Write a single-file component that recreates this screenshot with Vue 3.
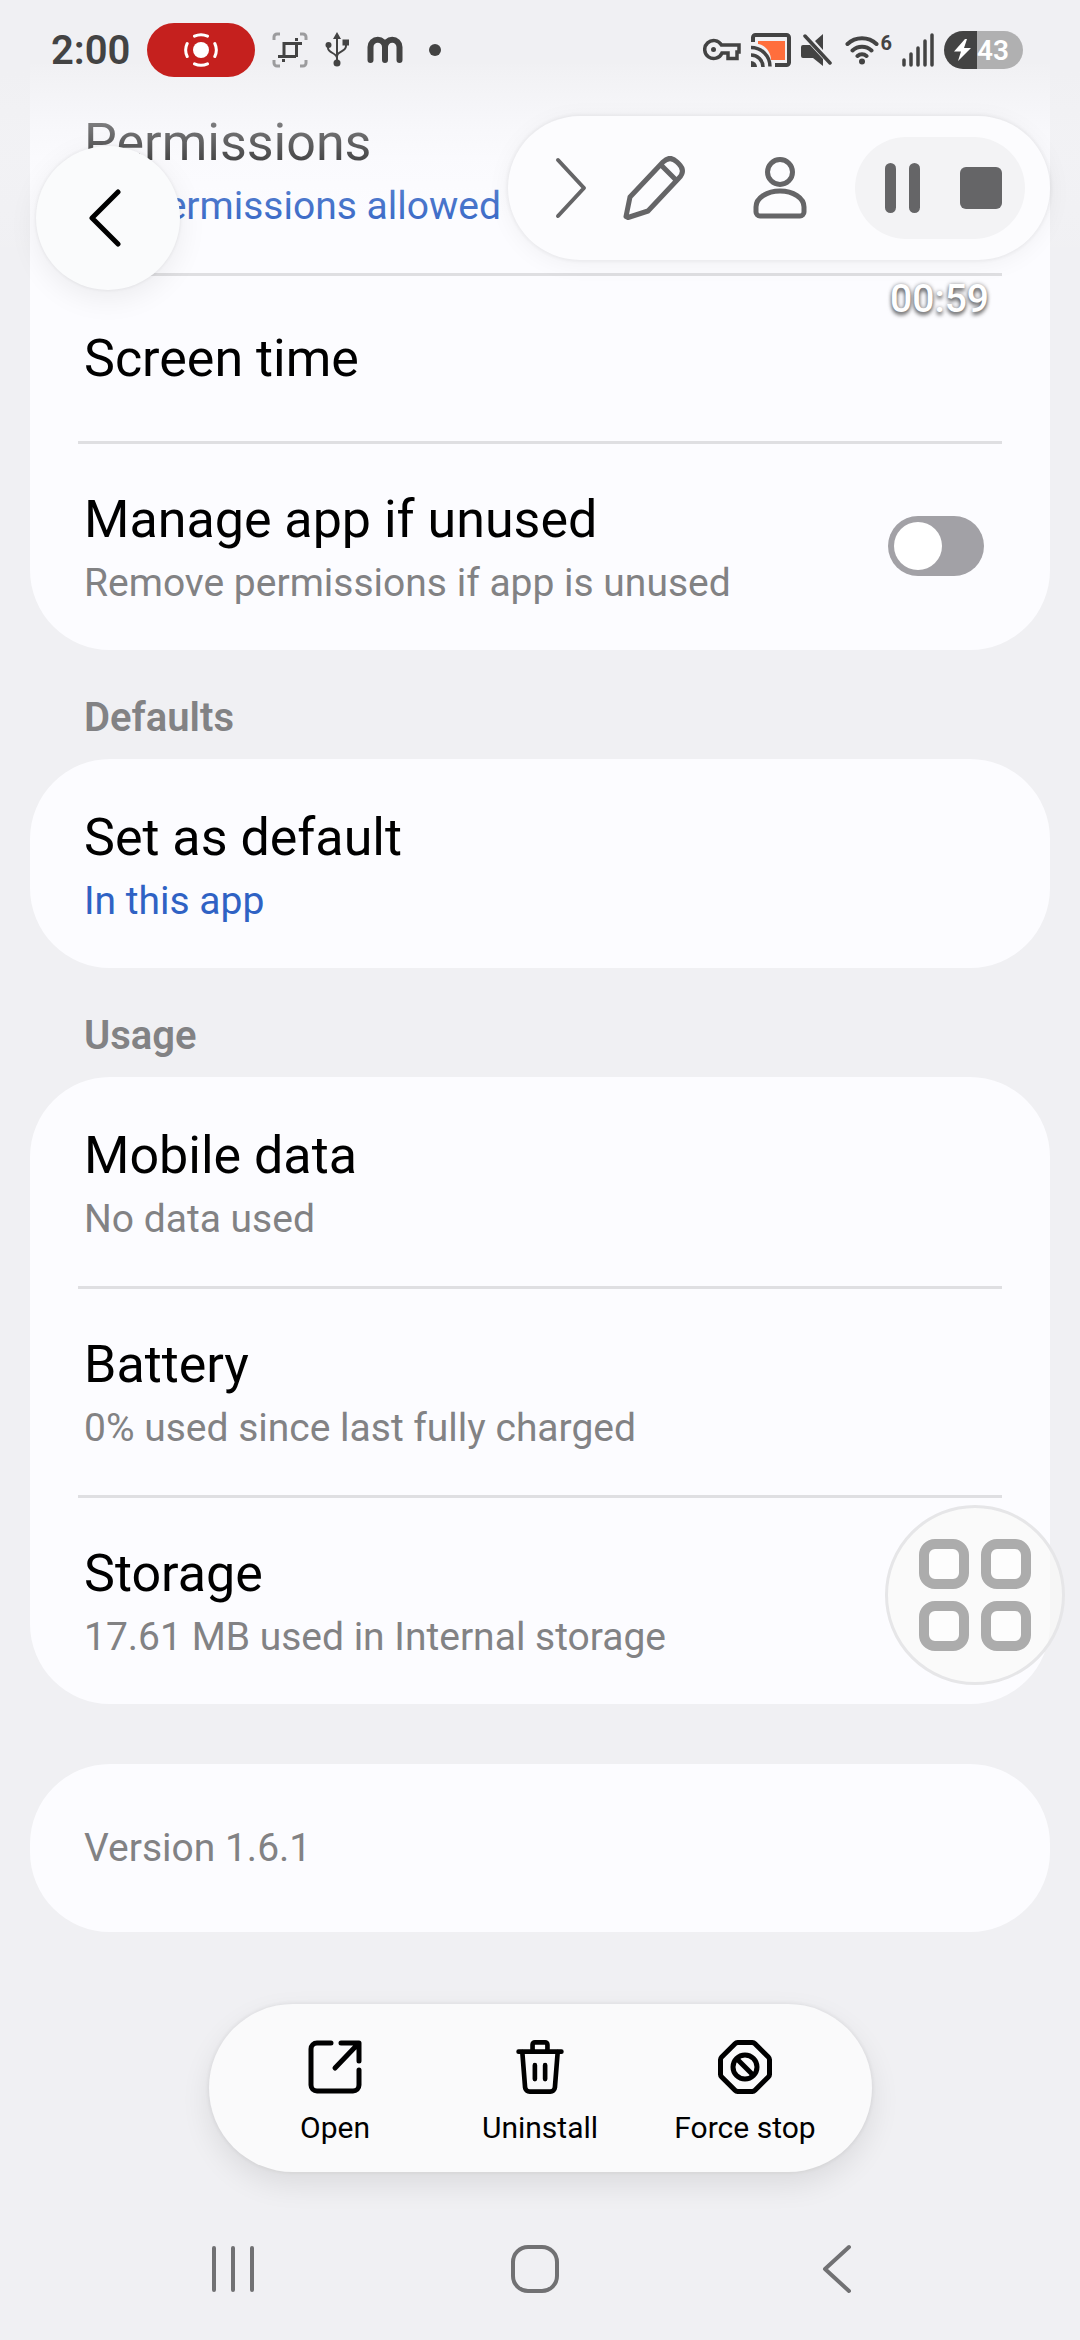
<script setup>
import { ref } from 'vue'

const manageUnused = ref(false)

const sections = [
  {
    id: 'privacy',
    rows: [
      { id: 'permissions', title: 'Permissions', detail: 'No permissions allowed', accent: true },
      { id: 'screen-time', title: 'Screen time' },
      { id: 'manage', title: 'Manage app if unused', detail: 'Remove permissions if app is unused', toggle: true }
    ]
  },
  {
    id: 'defaults',
    heading: 'Defaults',
    rows: [{ id: 'default', title: 'Set as default', detail: 'In this app', accent: true }]
  },
  {
    id: 'usage',
    heading: 'Usage',
    shortcut: true,
    rows: [
      { id: 'data', title: 'Mobile data', detail: 'No data used' },
      { id: 'battery', title: 'Battery', detail: '0% used since last fully charged' },
      { id: 'storage', title: 'Storage', detail: '17.61 MB used in Internal storage' }
    ]
  }
]
</script>

<template>
  <div class="page">
    <main class="list">
      <section v-for="section in sections" :key="section.id">
        <h2 v-if="section.heading" class="heading">{{ section.heading }}</h2>
        <div class="card" :class="{ continued: !section.heading }">
          <template v-for="row in section.rows" :key="row.id">
            <label v-if="row.toggle" class="row">
              <span class="text">
                <span class="title">{{ row.title }}</span>
                <span class="detail">{{ row.detail }}</span>
              </span>
              <input v-model="manageUnused" class="switch" type="checkbox" role="switch" />
            </label>
            <button v-else class="row" :class="{ single: !row.detail }" type="button">
              <span class="text">
                <span class="title">{{ row.title }}</span>
                <span v-if="row.detail" class="detail" :class="{ accent: row.accent }">{{ row.detail }}</span>
              </span>
            </button>
          </template>
          <button v-if="section.shortcut" class="shortcut" type="button" aria-label="Shortcuts">
            <svg width="112" height="112" viewBox="0 0 112 112" fill="#fff" fill-opacity=".6" stroke="#acacac" stroke-width="10">
              <rect x="5" y="5" width="40" height="40" rx="11" />
              <rect x="67" y="5" width="40" height="40" rx="11" />
              <rect x="5" y="67" width="40" height="40" rx="11" />
              <rect x="67" y="67" width="40" height="40" rx="11" />
            </svg>
          </button>
        </div>
      </section>
      <p class="card version">Version 1.6.1</p>
    </main>

    <nav class="actions" aria-label="App actions">
      <button type="button">
        <svg width="54" height="54" viewBox="0 0 54 54" fill="none" stroke="#000" stroke-width="5" stroke-linecap="round" stroke-linejoin="round">
          <path d="M23 3H9a6 6 0 0 0-6 6v36a6 6 0 0 0 6 6h36a6 6 0 0 0 6-6V30" />
          <path d="M33 3h18v18M50 4 27 28" />
        </svg>
        Open
      </button>
      <button type="button">
        <svg width="54" height="58" viewBox="0 0 54 58" fill="none" stroke="#000" stroke-width="5" stroke-linecap="round" stroke-linejoin="round">
          <path d="M4 12.500h46M19 12V5a2.500 2.500 0 0 1 2.500-2.500h11A2.500 2.500 0 0 1 35 5v7" />
          <path d="m8 13 3 38a5 5 0 0 0 5 4.500h22a5 5 0 0 0 5-4.500l3-38M21.500 27v15M32.500 27v15" />
        </svg>
        Uninstall
      </button>
      <button type="button">
        <svg width="54" height="54" viewBox="0 0 54 54" fill="none" stroke="#000" stroke-width="5" stroke-linejoin="round">
          <path d="M20 2.500h14a4 4 0 0 1 3 1.200L50.300 17a4 4 0 0 1 1.200 3v14a4 4 0 0 1-1.200 3L37 50.300a4 4 0 0 1-3 1.200H20a4 4 0 0 1-3-1.200L3.700 37a4 4 0 0 1-1.200-3V20a4 4 0 0 1 1.200-3L17 3.700a4 4 0 0 1 3-1.200Z" />
          <circle cx="27" cy="27" r="12" />
          <path d="m18.500 18.500 17 17" />
        </svg>
        Force stop
      </button>
    </nav>

    <nav class="system" aria-label="System navigation">
      <button type="button" aria-label="Recents">
        <svg width="44" height="50" viewBox="0 0 44 50" stroke="#717173" stroke-width="4" stroke-linecap="round"><path d="M3 4v42M22 4v42M41 4v42" /></svg>
      </button>
      <button type="button" aria-label="Home">
        <svg width="50" height="50" viewBox="0 0 50 50" fill="none" stroke="#717173" stroke-width="4"><rect x="3" y="3" width="44" height="44" rx="15" /></svg>
      </button>
      <button type="button" aria-label="Back">
        <svg width="32" height="50" viewBox="0 0 32 50" fill="none" stroke="#717173" stroke-width="4" stroke-linecap="round" stroke-linejoin="round"><path d="M28 3 4 25l24 22" /></svg>
      </button>
    </nav>

    <div class="fade"></div>

    <header class="status">
      <div class="side">
        <span class="clock">2:00</span>
        <span class="recording">
          <svg width="34" height="34" viewBox="0 0 34 34" fill="none" stroke="#fff" stroke-width="3" stroke-linecap="round">
            <circle cx="17" cy="17" r="8" fill="#fff" stroke="none" />
            <path d="M10.500 3.200a15 15 0 0 1 13 0M10.500 30.800a15 15 0 0 0 13 0M3.200 10.500a15 15 0 0 0 0 13M30.800 10.500a15 15 0 0 1 0 13" />
          </svg>
        </span>
        <svg width="36" height="36" viewBox="0 0 36 36" fill="none" stroke="#434343" stroke-width="3">
          <path stroke="#9c9c9e" d="M2 8V5a3 3 0 0 1 3-3h3M28 2h3a3 3 0 0 1 3 3v3M34 28v3a3 3 0 0 1-3 3h-3M8 34H5a3 3 0 0 1-3-3v-3" />
          <path d="M12 11.500h18M12 10v14M6 24.500h18M24.500 11v14" />
          <path d="M23 7.500h3M10 28.500h3" />
        </svg>
        <svg class="usb" width="24" height="36" viewBox="0 0 24 36" fill="none" stroke="#434343" stroke-width="2">
          <path d="M12 6v24M3 13v3c0 5 9 5 9 10M21 11v3c0 6-9 5-9 10" />
          <path fill="#434343" stroke="none" d="m12 0 4 7H8ZM17.500 7.500h6.500v6h-6.500Z" />
          <circle cx="3.500" cy="13" r="3" fill="#434343" stroke="none" />
          <circle cx="12" cy="31" r="3.500" fill="#434343" stroke="none" />
        </svg>
        <svg class="brand" width="36" height="28" viewBox="0 0 36 28" fill="none" stroke="#434343" stroke-width="6" stroke-linecap="round">
          <path d="M3.500 24V11a7.250 7.250 0 0 1 14.500 0v13M18 11a7.250 7.250 0 0 1 14.500 0v13" />
        </svg>
        <span class="dot"></span>
      </div>
      <div class="side">
        <svg class="key" width="38" height="24" viewBox="0 0 38 24" fill="none" stroke="#434343" stroke-width="3.500">
          <path d="M18.500 7H36v7h-2v6.500h-9V15h-6a9 9 0 1 1-.5-8Z" />
          <circle cx="10.500" cy="11.500" r="2.500" fill="#434343" stroke="none" />
        </svg>
        <svg class="cast" width="40" height="34" viewBox="0 0 40 34" fill="none" stroke="#434343" stroke-width="4">
          <path fill="#ff6e3c" stroke="none" d="M7 8h27v19H20C20 19 14 12 7 11Z" />
          <path d="M2 9V4.500A2.500 2.500 0 0 1 4.500 2h31A2.500 2.500 0 0 1 38 4.500v25a2.500 2.500 0 0 1-2.500 2.500H24" />
          <path stroke-width="3.500" d="M0 14.500a19 19 0 0 1 19 19M0 22a12 12 0 0 1 12 12" />
          <path fill="#434343" stroke="none" d="M0 28a6 6 0 0 1 6 6H0Z" />
        </svg>
        <svg class="mute" width="32" height="32" viewBox="0 0 32 32" fill="#434343">
          <path d="M2 11h7l13 14v7l-10-8H2a2 2 0 0 1-2-2v-9a2 2 0 0 1 2-2ZM14 7l8-7v16Z" />
          <path d="m4 2 25 27" fill="none" stroke="#434343" stroke-width="3.500" stroke-linecap="round" />
        </svg>
        <span class="wifi">
          <svg width="34" height="30" viewBox="0 0 34 30" fill="none" stroke="#434343" stroke-width="4" stroke-linecap="round">
            <path d="M2.500 9a21 21 0 0 1 29 0M7.500 15.500a14 14 0 0 1 19 0M12.500 21a7 7 0 0 1 9 0" />
            <circle cx="17" cy="26.500" r="3" fill="#434343" stroke="none" />
          </svg>
          <sup>6</sup>
        </span>
        <svg class="signal" width="32" height="34" viewBox="0 0 32 34" stroke="#434343" stroke-width="3.500" stroke-linecap="round">
          <path d="M2 27v5M9 21v11M16 15v17M23 8v24M30 2v30" />
        </svg>
        <span class="power">
          <svg width="20" height="22" viewBox="0 0 20 22" fill="#fff"><path d="M12 0 1 12.500h7L5 22l13-13h-7l3-9Z" /></svg>
          43
        </span>
      </div>
    </header>

    <button class="back" type="button" aria-label="Navigate up">
      <svg width="32" height="60" viewBox="0 0 32 60" fill="none" stroke="#000" stroke-width="5" stroke-linecap="round" stroke-linejoin="round"><path d="M29 4 3 30l26 26" /></svg>
    </button>

    <div class="recorder">
      <div class="tools">
        <button type="button" aria-label="Collapse">
          <svg width="32" height="62" viewBox="0 0 32 62" fill="none" stroke="#656567" stroke-width="4" stroke-linecap="round" stroke-linejoin="round"><path d="m3 3 26 28L3 59" /></svg>
        </button>
        <button class="draw" type="button" aria-label="Draw">
          <svg width="62" height="64" viewBox="0 0 62 64" fill="none" stroke="#656567" stroke-width="5" stroke-linejoin="round">
            <path d="M3 60.500 7 41 40 6q7-7 14 0l2 2q7 7 0 14L25 55 5 61.500ZM38 9l16 16" />
          </svg>
        </button>
        <button class="person" type="button" aria-label="Show camera">
          <svg width="54" height="64" viewBox="0 0 54 64" fill="none" stroke="#656567" stroke-width="5" stroke-linejoin="round">
            <circle cx="27" cy="16" r="12.500" />
            <path d="M3 56v-5a24 16 0 0 1 48 0v5a4 4 0 0 1-4 4H7a4 4 0 0 1-4-4Z" />
          </svg>
        </button>
        <div class="transport">
          <button type="button" aria-label="Pause">
            <svg width="36" height="50" viewBox="0 0 36 50" fill="#656567"><rect x="0" y="0" width="11" height="50" rx="5.500" /><rect x="24" y="0" width="11" height="50" rx="5.500" /></svg>
          </button>
          <button type="button" aria-label="Stop">
            <svg width="42" height="42" viewBox="0 0 42 42" fill="#656567"><rect width="42" height="42" rx="6" /></svg>
          </button>
        </div>
      </div>
      <time class="elapsed">00:59</time>
    </div>
  </div>
</template>

<style>
body {
  background: #f0f0f3;
}
</style>

<style scoped>
.page {
  position: relative;
  min-height: 100vh;
  overflow: hidden;
  box-sizing: border-box;
  background: #f0f0f3;
  color: #000;
  font-family: Roboto, "Noto Sans", sans-serif;
}

button {
  margin: 0;
  padding: 0;
  border: 0;
  background: none;
  color: inherit;
  font: inherit;
}

svg {
  display: block;
  flex: none;
}

.list {
  padding: 64px 30px 0;
}

.card {
  position: relative;
  margin: 0;
  border-radius: 80px;
  background: #fcfcff;
}

.continued {
  border-radius: 0 0 80px 80px;
}

.heading {
  box-sizing: border-box;
  margin: 0;
  padding: 41px 54px 14px;
  color: #828284;
  font-size: 40px;
  font-weight: 600;
  line-height: 54px;
}

.row {
  display: flex;
  align-items: center;
  justify-content: space-between;
  box-sizing: border-box;
  width: calc(100% - 96px);
  min-height: 209px;
  margin: 0 48px;
  padding: 0 18px 0 6px;
  text-align: left;
}

.row + .row {
  box-shadow: inset 0 3px #dfdfe2;
}

.single {
  min-height: 168px;
}

.text {
  display: flex;
  flex-direction: column;
  gap: 2px;
  padding-top: 4px;
}

.title {
  font-size: 52px;
  line-height: 68px;
}

.detail,
.version {
  color: #828284;
  font-size: 39px;
  line-height: 54px;
}

.accent {
  color: #2f62c4;
}

.version {
  margin-top: 60px;
  padding: 57px 54px;
}

.switch {
  appearance: none;
  display: flex;
  flex: none;
  box-sizing: border-box;
  width: 96px;
  height: 60px;
  margin: 0;
  padding: 6px;
  border-radius: 30px;
  background: #a2a1a6;
}

.switch::before {
  content: "";
  width: 48px;
  height: 48px;
  border-radius: 50%;
  background: #fff;
}

.switch:checked {
  justify-content: flex-end;
  background: #2f62c4;
}

.shortcut {
  position: absolute;
  right: -15px;
  bottom: 19px;
  display: flex;
  align-items: center;
  justify-content: center;
  box-sizing: border-box;
  width: 180px;
  height: 180px;
  border: 3px solid #e6e6e8;
  border-radius: 50%;
  background: rgba(249, 249, 248, 0.65);
}

.actions {
  display: grid;
  grid-template-columns: repeat(3, 205px);
  justify-content: center;
  box-sizing: border-box;
  width: fit-content;
  height: 168px;
  margin: 72px auto 0;
  padding: 0 24px;
  border-radius: 84px;
  background: #fafafb;
  box-shadow: 0 0 3px 2px rgba(0, 0, 0, 0.04), 0 12px 30px rgba(0, 0, 0, 0.09);
}

.actions button {
  display: flex;
  flex-direction: column;
  align-items: center;
  justify-content: flex-end;
  gap: 14px;
  padding-bottom: 24px;
  font-size: 30px;
  line-height: 40px;
}

.actions svg {
  height: 54px;
}

.system {
  display: grid;
  grid-template-columns: repeat(3, 1fr);
  padding: 72px 92px 46px 82px;
}

.system button {
  display: flex;
  justify-content: center;
}

.fade {
  position: absolute;
  inset: 0 0 auto;
  height: 273px;
  background: linear-gradient(#f0f0f3 60px, rgba(240, 240, 243, 0.88) 72px, rgba(243, 243, 246, 0.48) 128px, rgba(246, 246, 249, 0.29) 160px, rgba(252, 252, 255, 0.07) 218px, rgba(252, 252, 255, 0));
  pointer-events: none;
}

.status {
  position: absolute;
  inset: 0 0 auto;
  display: flex;
  align-items: center;
  justify-content: space-between;
  height: 100px;
  padding: 0 57px 0 51px;
  color: #434343;
}

.side {
  display: flex;
  align-items: center;
}

.clock {
  font-size: 40px;
  font-weight: 600;
}

.recording {
  display: flex;
  align-items: center;
  justify-content: center;
  width: 108px;
  height: 54px;
  margin: 0 17px;
  border-radius: 27px;
  background: #c5201e;
}

.usb {
  margin-left: 17px;
}

.brand {
  margin-left: 18px;
}

.dot {
  width: 12px;
  height: 12px;
  margin-left: 26px;
  border-radius: 50%;
  background: #434343;
}

.cast,
.mute,
.signal,
.power {
  margin-left: 10px;
}

.wifi {
  display: flex;
  align-items: flex-start;
  gap: 2px;
  margin-left: 12px;
}

.wifi sup {
  font-size: 20px;
  font-weight: 700;
  line-height: 16px;
  vertical-align: top;
}

.power {
  display: flex;
  align-items: center;
  gap: 4px;
  box-sizing: border-box;
  width: 79px;
  height: 38px;
  padding-left: 9px;
  border-radius: 19px;
  background: linear-gradient(90deg, #434343 42%, #b0b0b1 42%);
  color: #fff;
  font-size: 28px;
  font-weight: 600;
}

.back {
  position: absolute;
  top: 146px;
  left: 36px;
  display: flex;
  align-items: center;
  justify-content: center;
  box-sizing: border-box;
  width: 144px;
  height: 144px;
  padding-right: 6px;
  border-radius: 50%;
  background: #fafbfc;
  box-shadow: 0 0 3px 1px rgba(0, 0, 0, 0.05), 0 8px 30px rgba(0, 0, 0, 0.07);
}

.recorder {
  position: absolute;
  top: 116px;
  right: 30px;
  display: flex;
  flex-direction: column;
  align-items: flex-end;
}

.tools {
  display: flex;
  align-items: center;
  box-sizing: border-box;
  height: 144px;
  padding: 0 25px 0 47px;
  border-radius: 72px;
  background: #fcfcfe;
  box-shadow: 0 0 3px 2px rgba(0, 0, 0, 0.04), 0 4px 24px rgba(0, 0, 0, 0.05);
}

.draw {
  margin-left: 36px;
}

.person {
  margin-left: 68px;
}

.transport {
  display: flex;
  align-items: center;
  justify-content: center;
  gap: 39px;
  box-sizing: border-box;
  width: 170px;
  height: 102px;
  margin-left: 48px;
  padding-left: 7px;
  border-radius: 51px;
  background: #f3f3f5;
}

.elapsed {
  margin: 16px 61px 0 0;
  color: #fff;
  font-size: 39px;
  font-weight: 500;
  line-height: 46px;
  text-shadow: 0 3px 4px rgba(0, 0, 0, 0.6), 0 0 4px rgba(0, 0, 0, 0.35);
}
</style>
